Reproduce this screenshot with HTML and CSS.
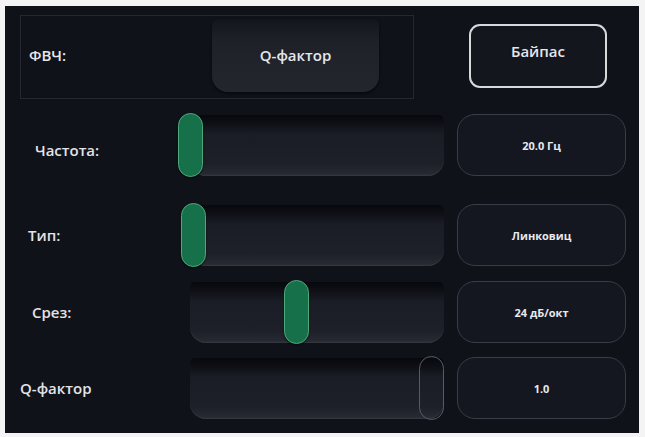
FILE: index.html
```html
<!DOCTYPE html>
<html lang="ru">
<head>
<meta charset="utf-8">
<title>ФВЧ</title>
<link rel="stylesheet" href="styles.css">
</head>
<body>
<div class="panel">
  <div class="top">
    <div class="hpf">
      <span class="hpf-label">ФВЧ:</span>
      <div class="mode-btn">Q-фактор</div>
    </div>
    <div class="bypass">Байпас</div>
  </div>

  <div class="row row-1">
    <div class="label">Частота:</div>
    <div class="slider">
      <div class="track"></div>
      <div class="thumb" style="left:0%"></div>
    </div>
    <div class="value">20.0 Гц</div>
  </div>

  <div class="row row-2">
    <div class="label label-tip">Тип:</div>
    <div class="slider">
      <div class="track"></div>
      <div class="thumb" style="left:1.2%"></div>
    </div>
    <div class="value">Линковиц</div>
  </div>

  <div class="row row-3">
    <div class="label">Срез:</div>
    <div class="slider">
      <div class="track"></div>
      <div class="thumb" style="left:40%"></div>
    </div>
    <div class="value">24 дБ/окт</div>
  </div>

  <div class="row row-4">
    <div class="label label-q">Q-фактор</div>
    <div class="slider">
      <div class="track"></div>
      <div class="thumb thumb-off" style="left:90.5%"></div>
    </div>
    <div class="value">1.0</div>
  </div>
</div>
</body>
</html>
```

FILE: styles.css
```css
* { box-sizing: border-box; }

html, body {
  margin: 0;
  padding: 0;
  background: #f4f4f4;
}

body {
  padding: 6px 6px 4px 5px;
  font-family: "Open Sans", "DejaVu Sans", sans-serif;
  color: #e6e7ea;
}

.panel {
  width: 634px;
  height: 427px;
  background: #10121a;
  display: flex;
  flex-direction: column;
}

.top {
  display: flex;
  align-items: flex-start;
  height: 100px;
}

.hpf {
  margin: 9px 0 0 15px;
  width: 394px;
  height: 84px;
  border: 1px solid #262831;
  display: flex;
  align-items: flex-start;
}

.hpf-label {
  font-size: 15px;
  font-weight: 600;
  margin: 29px 0 0 8px;
  width: 183px;
}

.mode-btn {
  margin-top: 3px;
  width: 167px;
  height: 73px;
  border-radius: 6px 6px 16px 16px;
  background: linear-gradient(180deg, #14151c 0%, #1f2129 30%, #24262e 100%);
  box-shadow: 0 2px 3px rgba(0,0,0,0.5);
  display: flex;
  align-items: center;
  justify-content: center;
  font-size: 15px;
  font-weight: 600;
  padding-bottom: 2px;
}

.bypass {
  margin: 18px 0 0 55px;
  width: 138px;
  height: 64px;
  border: 2px solid #d9d9dc;
  border-radius: 11px;
  background: #14161e;
  display: flex;
  justify-content: center;
  font-size: 15px;
  font-weight: 600;
  padding-top: 15px;
}

.row {
  display: flex;
  align-items: center;
  height: 66px;
}

.row-1 { margin-top: 6px; }
.row-2 { margin-top: 24px; }
.row-3 { margin-top: 11px; }
.row-4 { margin-top: 10px; }

.label {
  width: 173px;
  padding-left: 30px;
  font-size: 15px;
  font-weight: 600;
  color: #e2e3e6;
  padding-top: 10px;
}

.label-tip { padding-left: 23px; padding-top: 0; }
.label-q { padding-left: 15px; padding-top: 0; }
.row-3 .label { padding-left: 27px; padding-top: 0; }

.slider {
  position: relative;
  width: 266px;
  height: 64px;
}

.track {
  margin: 2px 0 0 12px;
  height: 61px;
  border-radius: 5px 5px 16px 16px;
  background: linear-gradient(180deg, #07080c 0%, #0f1016 14%, #1b1d26 32%, #1e2029 80%, #262832 96%, #30323c 100%);
  box-shadow: inset 0 -1px 0 #34363f;
}

.thumb {
  position: absolute;
  top: 0;
  width: 25px;
  height: 64px;
  border-radius: 13px;
  background: #167049;
  border: 1.5px solid #4fa87c;
  box-shadow: 0 1px 2px rgba(0,0,0,0.6);
}

.thumb-off {
  background: transparent;
  border: 1.5px solid #585b66;
  box-shadow: none;
}

.value {
  margin-left: 13px;
  width: 169px;
  height: 62px;
  border: 1.5px solid #3a3c47;
  border-radius: 18px;
  background: #141620;
  display: flex;
  align-items: center;
  justify-content: center;
  font-size: 11px;
  font-weight: 700;
  color: #e8e9ec;
}
```
